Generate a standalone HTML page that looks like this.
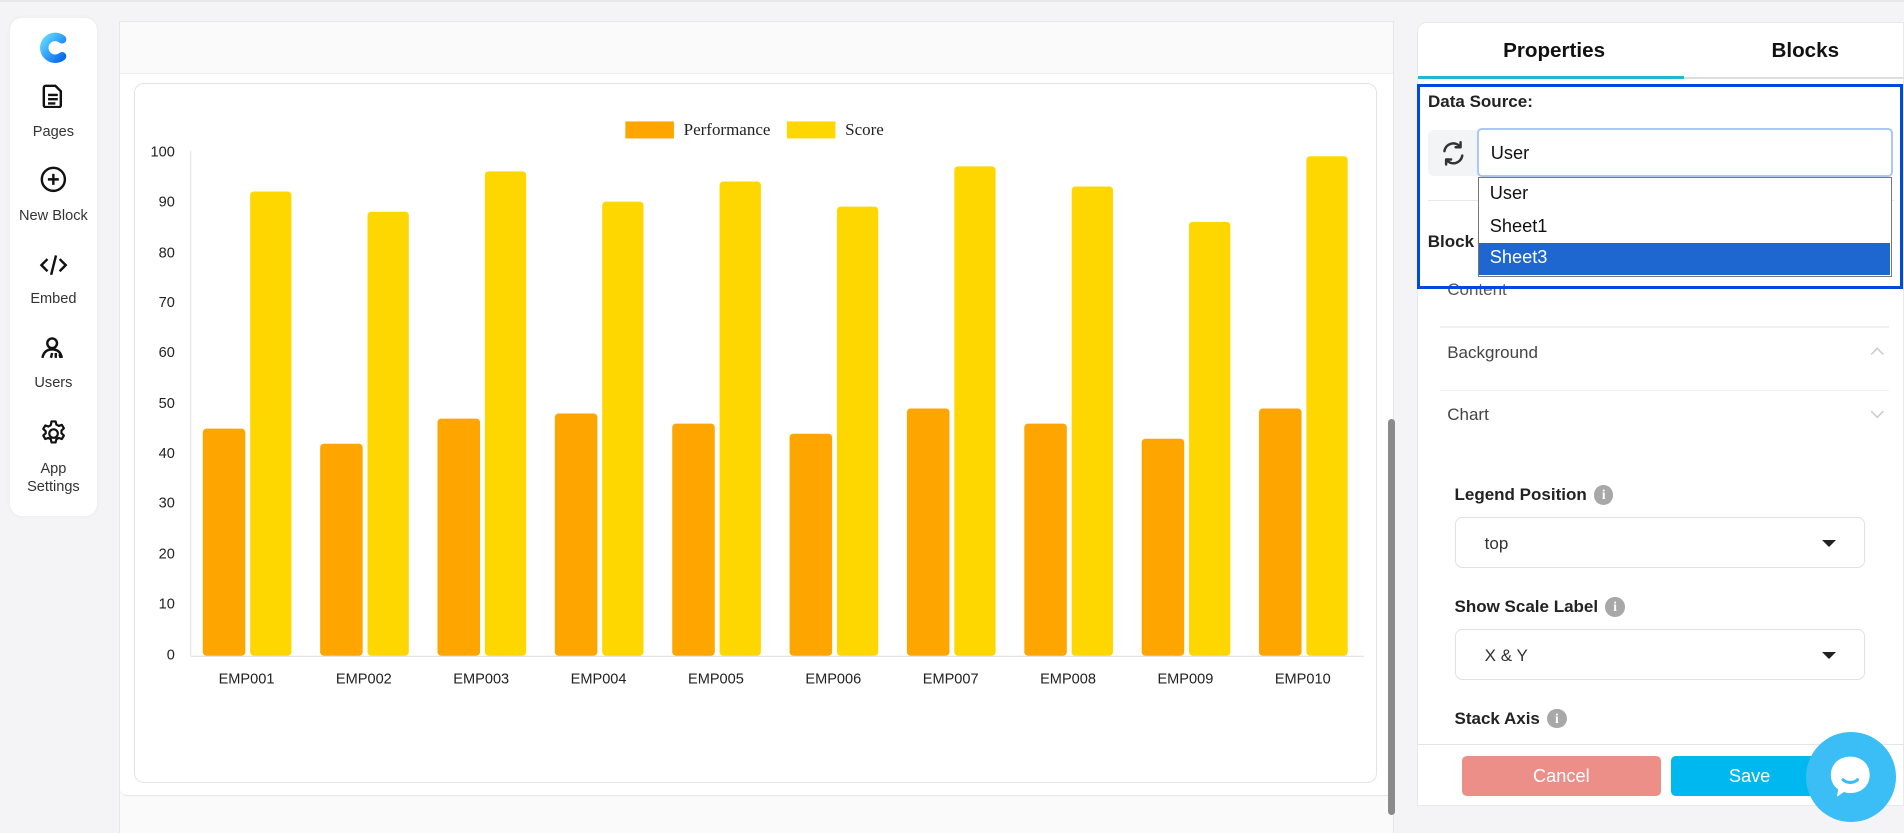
<!DOCTYPE html>
<html><head><meta charset="utf-8">
<style>
html{zoom:1.2143}
*{box-sizing:border-box;margin:0;padding:0}
body{width:1568px;height:686px;overflow:hidden;background:#f4f4f6;font-family:"Liberation Sans",sans-serif;color:#222;position:relative}
.abs{position:absolute}
.side{left:8px;top:15px;width:72px;height:410px;background:#fff;border-radius:10px;box-shadow:0 0 4px rgba(0,0,0,.05)}
.sitem{position:absolute;left:0;width:72px;text-align:center;font-size:12px;color:#333}
.canvas{left:98px;top:17px;width:1050px;height:669px;background:#fafafa;border:1px solid #e6e6e6;border-bottom:none}
.canvas .in{position:absolute;left:0;top:42px;width:1048px;height:596px;background:#fff;border-top:1px solid #eee;border-bottom:1px solid #e6e6e6;border-radius:0 0 6px 6px}
.card{left:110px;top:68px;width:1024px;height:577px;background:#fff;border:1px solid #e3e3e3;border-radius:8px}
.panel{left:1167px;top:18px;width:401px;height:646px;background:#fff;border-radius:8px 0 0 0;border:1px solid #e8e8e8}
.lbl{font-size:14px;font-weight:bold;color:#222}
.sel{background:#fff;border:1px solid #e2e2e2;border-radius:6px}
.caret{position:absolute;width:0;height:0;border-left:6px solid transparent;border-right:6px solid transparent;border-top:6px solid #222}
.info{display:inline-block;width:16px;height:16px;border-radius:50%;background:#a8a8a8;color:#fff;font-size:11px;font-weight:bold;text-align:center;line-height:16px;vertical-align:1px;margin-left:6px;font-family:"Liberation Serif",serif}
</style></head><body>
<div class="abs" style="left:0;top:0;width:1568px;height:2px;background:#e8e8ea"></div>

<div class="abs side">
  <svg class="abs" style="left:24px;top:11px" width="24" height="26" viewBox="0 0 24 26"><defs><linearGradient id="g" x1="0" y1="0" x2="1" y2="1"><stop offset="0" stop-color="#5fd6ff"/><stop offset="1" stop-color="#0a6cf0"/></linearGradient></defs><path d="M19 6 A9 9 0 1 0 19 20" fill="none" stroke="url(#g)" stroke-width="7" stroke-linecap="round"/></svg>
  <svg class="abs" style="left:27px;top:54px" width="18" height="20" viewBox="0 0 18 20"><path d="M3 1.5h8l4.5 4.5v11.5a1.5 1.5 0 0 1-1.5 1.5H3a1.5 1.5 0 0 1-1.5-1.5V3A1.5 1.5 0 0 1 3 1.5z M5 9h8 M5 12.5h8 M5 16h6" fill="none" stroke="#111" stroke-width="2"/></svg>
  <div class="sitem" style="top:87px">Pages</div>
  <svg class="abs" style="left:25px;top:122px" width="22" height="22" viewBox="0 0 22 22"><circle cx="11" cy="11" r="9.5" fill="none" stroke="#111" stroke-width="2"/><path d="M11 6.5v9M6.5 11h9" stroke="#111" stroke-width="2"/></svg>
  <div class="sitem" style="top:156px">New Block</div>
  <svg class="abs" style="left:24px;top:193px" width="24" height="20" viewBox="0 0 24 20"><path d="M7 5l-5 5 5 5M17 5l5 5-5 5M14 2l-4 16" fill="none" stroke="#111" stroke-width="2"/></svg>
  <div class="sitem" style="top:225px">Embed</div>
  <svg class="abs" style="left:25px;top:262px" width="22" height="20" viewBox="0 0 22 20"><circle cx="10" cy="6" r="4" fill="none" stroke="#111" stroke-width="2"/><path d="M2 18c1-5 4-7 8-7s7 2 8 7M9 18l1-4M13 18l0-4M17 18l-1-3" fill="none" stroke="#111" stroke-width="2"/></svg>
  <div class="sitem" style="top:294px">Users</div>
  <svg class="abs" style="left:24px;top:330px" width="24" height="24" viewBox="0 0 24 24"><path d="M12 8.5a3.5 3.5 0 1 0 0 7a3.5 3.5 0 1 0 0-7z M10.3 2h3.4l.6 2.6 2 1.1 2.5-.9 1.7 2.9-2 1.8v2.3l2 1.8-1.7 2.9-2.5-.9-2 1.1-.6 2.6h-3.4l-.6-2.6-2-1.1-2.5.9-1.7-2.9 2-1.8V10l-2-1.8 1.7-2.9 2.5.9 2-1.1z" fill="none" stroke="#111" stroke-width="1.8" stroke-linejoin="round"/></svg>
  <div class="sitem" style="top:364px;line-height:15px">App<br>Settings</div>
</div>

<div class="abs canvas"><div class="in"></div></div>
<div class="abs" style="left:1143px;top:345px;width:6px;height:326px;background:#8a8a8a;border-radius:3px"></div>
<div class="abs card"></div>

<svg class="abs" style="left:0;top:0" width="1150" height="686" viewBox="0 0 1150 686">
<g font-family="Liberation Sans, sans-serif" font-size="12" fill="#222" text-anchor="end">
<text x="144" y="129">100</text><text x="144" y="170">90</text><text x="144" y="212">80</text><text x="144" y="253">70</text><text x="144" y="294">60</text><text x="144" y="336">50</text><text x="144" y="377">40</text><text x="144" y="418">30</text><text x="144" y="460">20</text><text x="144" y="501">10</text><text x="144" y="543">0</text>
</g>
<line x1="157" y1="124" x2="157" y2="540" stroke="#e5e5e5"/>
<line x1="157" y1="540.5" x2="1123" y2="540.5" stroke="#e0e0e0"/>
<rect x="515" y="100" width="40" height="14" fill="#ffa500"/>
<text x="563" y="111" font-family="Liberation Serif, serif" font-size="14" fill="#222">Performance</text>
<rect x="648" y="100" width="40" height="14" fill="#ffd700"/>
<text x="696" y="111" font-family="Liberation Serif, serif" font-size="14" fill="#222">Score</text>
<g id="bars"></g>
<g font-family="Liberation Sans, sans-serif" font-size="12" fill="#222" text-anchor="middle" id="xl"></g>
</svg>
<script>
var p=[45,42,47,48,46,44,49,46,43,49],s=[92,88,96,90,94,89,97,93,86,99],b='',t='';
for(var i=0;i<10;i++){var c=203+96.65*i;var hp=p[i]*4.155,hs=s[i]*4.155;
b+='<rect x="'+(c-36)+'" y="'+(540-hp)+'" width="35" height="'+hp+'" rx="3" fill="#ffa500"/>';
b+='<rect x="'+(c+3)+'" y="'+(540-hs)+'" width="34" height="'+hs+'" rx="3" fill="#ffd700"/>';
t+='<text x="'+c+'" y="563">EMP0'+(i<9?'0'+(i+1):'10')+'</text>';}
document.getElementById('bars').innerHTML=b;document.getElementById('xl').innerHTML=t;
</script>

<div class="abs panel">
  <div class="abs" style="left:70px;top:13px;font-size:17px;font-weight:bold;color:#111">Properties</div>
  <div class="abs" style="left:291px;top:13px;font-size:17px;font-weight:bold;color:#111">Blocks</div>
  <div class="abs" style="left:0;top:45px;width:400px;height:1px;background:#ddd"></div>
  <div class="abs" style="left:0;top:44px;width:219px;height:2px;background:#1fb6d8"></div>
  <div class="abs" style="left:8px;top:146px;width:384px;height:1px;background:#e8e8e8"></div>
  <div class="abs lbl" style="left:8px;top:172px">Block C</div>
  <div class="abs" style="left:24px;top:212px;font-size:14px;color:#555">Content</div>
  <div class="abs" style="left:18px;top:250px;width:370px;height:1px;background:#f0f0f0"></div>
  <div class="abs" style="left:24px;top:264px;font-size:14px;color:#444">Background</div>
  <svg class="abs" style="left:372px;top:266px" width="12" height="8"><path d="M1 7l5-5 5 5" fill="none" stroke="#ccc" stroke-width="1.3"/></svg>
  <div class="abs" style="left:18px;top:302px;width:370px;height:1px;background:#f0f0f0"></div>
  <div class="abs" style="left:24px;top:315px;font-size:14px;color:#444">Chart</div>
  <svg class="abs" style="left:372px;top:319px" width="12" height="8"><path d="M1 1l5 5 5-5" fill="none" stroke="#ccc" stroke-width="1.3"/></svg>

  <div class="abs lbl" style="left:30px;top:381px">Legend Position<span class="info">i</span></div>
  <div class="abs sel" style="left:30px;top:407px;width:338px;height:42px"><div class="abs" style="left:24px;top:13px;font-size:14px;color:#333">top</div><div class="caret" style="left:302px;top:18px"></div></div>
  <div class="abs lbl" style="left:30px;top:473px">Show Scale Label<span class="info">i</span></div>
  <div class="abs sel" style="left:30px;top:499px;width:338px;height:42px"><div class="abs" style="left:24px;top:13px;font-size:14px;color:#333">X &amp; Y</div><div class="caret" style="left:302px;top:18px"></div></div>
  <div class="abs lbl" style="left:30px;top:565px">Stack Axis<span class="info">i</span></div>
  <div class="abs" style="left:0;top:594px;width:400px;height:1px;background:#e5e5e5"></div>
  <div class="abs" style="left:36px;top:604px;width:164px;height:33px;background:#ec8f89;border-radius:4px;color:#fff;font-size:15px;text-align:center;line-height:33px">Cancel</div>
  <div class="abs" style="left:208px;top:604px;width:160px;height:33px;background:#00b8f0;border-radius:4px;color:#fff;font-size:15px;text-align:center;line-height:33px;padding-right:30px">Save</div>
</div>

<div class="abs" style="left:1167px;top:69px;width:400px;height:169px;border:3px solid #0049e0"></div>
<div class="abs lbl" style="left:1176px;top:76px">Data Source:</div>
<div class="abs" style="left:1176px;top:107px;width:44px;height:38px;background:#f3f4f6;border-radius:5px 0 0 5px"></div>
<svg class="abs" style="left:1186px;top:115px" width="22" height="22" viewBox="0 0 24 24"><path d="M4 10a8 8 0 0 1 14.5-3.5M20 14a8 8 0 0 1-14.5 3.5M18.5 2v4.5H14M5.5 22v-4.5H10" fill="none" stroke="#333" stroke-width="2.2" stroke-linecap="round" stroke-linejoin="round"/></svg>
<div class="abs" style="left:1216px;top:105px;width:343px;height:41px;border:2px solid #a9c8f2;border-radius:4px;background:#fff"><div class="abs" style="left:10px;top:11px;font-size:15px;color:#111">User</div></div>
<div class="abs" style="left:1217px;top:146px;width:341px;height:82px;background:#fff;border:1px solid #777">
  <div class="abs" style="left:9px;top:4px;font-size:15px;color:#111">User</div>
  <div class="abs" style="left:9px;top:31px;font-size:15px;color:#111">Sheet1</div>
  <div class="abs" style="left:0;top:53px;width:339px;height:27px;background:#1e66d0"><div class="abs" style="left:9px;top:4px;font-size:15px;color:#fff">Sheet3</div></div>
</div>

<div class="abs" style="left:1487px;top:603px;width:74px;height:74px;border-radius:50%;background:#3bbdf6"></div>
<svg class="abs" style="left:1504px;top:620px" width="40" height="40" viewBox="0 0 40 40"><path d="M20 3c9 0 16 6 16 15s-7 15-16 15c-2 0-3 0-5-1l-6 4 1-6c-4-3-6-7-6-12 0-9 7-15 16-15z" fill="#fff"/><path d="M14 22c3 3 9 3 12 0" fill="none" stroke="#3bbdf6" stroke-width="2.5" stroke-linecap="round"/></svg>
</body></html>
